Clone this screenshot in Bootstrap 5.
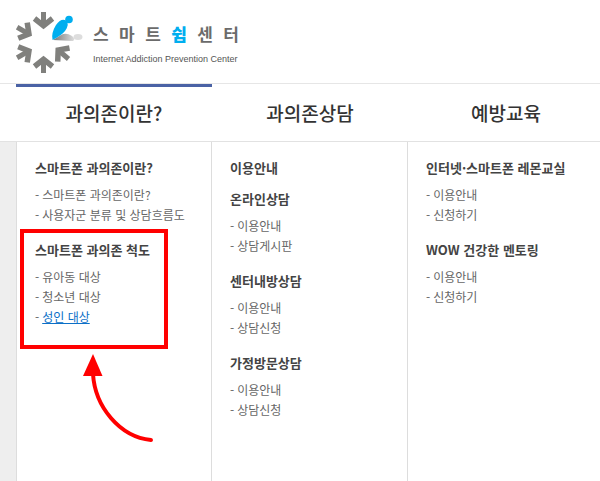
<!DOCTYPE html>
<html lang="ko">
<head>
<meta charset="utf-8">
<meta name="viewport" content="width=device-width, initial-scale=1">
<title>스마트쉼센터</title>
<link href="https://cdn.jsdelivr.net/npm/bootstrap@5.3.0/dist/css/bootstrap.min.css" rel="stylesheet">
<style>
body { font-family: "Noto Sans CJK KR", sans-serif; color: #444; background: #fff; }
a { color: inherit; text-decoration: none; }
.site-header { height: 83px; padding: 11px 16px; }
.brand-words { width: 146px; margin-left: 10px; padding-top: 11px; }
.brand-ko { font-size: 17px; line-height: 24px; font-weight: 700; color: #6b6b6b; }
.brand-ko .accent { color: #00aeef; font-weight: 900; }
.brand-en { padding-top: 6px; font-family: "Liberation Sans", sans-serif; font-size: 9px; line-height: 14px; color: #555; white-space: nowrap; }
.menu-grid { display: grid; grid-template-columns: 16px repeat(3, minmax(196px, 1fr)); }
.menu-top { border-top: 1px solid #e6e6e6; border-bottom: 1px solid #e2e2e2; }
.menu-title { height: 57px; font-size: 19px; line-height: 28px; font-weight: 500; color: #333; }
.menu-title.current { box-shadow: inset 0 3px #4a62a5; }
.menu-body { flex: 1 0 auto; }
.gutter { background: #eee; }
.menu-col { border-left: 1px solid #ddd; padding: 14px 0 0 18px; }
.menu-col + .menu-col { margin-left: -1px; }
.menu-group { position: relative; margin-bottom: 7px; }
.menu-group h2 { margin: 0; font-size: 13px; line-height: 24px; font-weight: 700; color: #444; }
.menu-group ul { padding: 5px 0 6px; }
.menu-group li { display: flex; gap: 3px; font-size: 12px; line-height: 20px; color: #666; }
.menu-group li::before { content: "-"; }
.menu-group .picked { color: #0b6fc7; text-decoration: underline; }
.highlight { position: absolute; left: -15px; top: -9px; width: 148px; height: 120px; border: 4px solid #f00; pointer-events: none; }
.pointer-arrow { position: absolute; left: 45px; top: 115px; pointer-events: none; }
</style>
</head>
<body class="d-flex flex-column min-vh-100 overflow-x-hidden">
<header class="site-header">
  <a href="#" class="d-inline-flex align-items-start">
    <svg width="67" height="63" viewBox="16 11 67 63" aria-hidden="true">
      <defs>
        <g id="ray" fill="none" stroke="#80807d" stroke-width="5"><path d="M0-30.500V-16"/><path d="M-9-24L0-16.800L9-24" stroke-width="5.500"/></g>
        <linearGradient id="shade"><stop offset="0" stop-color="#777"/><stop offset="1" stop-color="#ddd"/></linearGradient>
      </defs>
      <use href="#ray" transform="translate(43.5 42.5)"/>
      <use href="#ray" transform="translate(43.5 42.5) rotate(-60)"/>
      <use href="#ray" transform="translate(43.5 42.5) rotate(-120)"/>
      <use href="#ray" transform="translate(43.5 42.5) rotate(180)"/>
      <use href="#ray" transform="translate(45.5 39) rotate(131)"/>
      <path d="M53 40L61 35Q66 32 72 36Q76 39 73 41Z" fill="url(#shade)"/>
      <ellipse cx="78" cy="37" rx="4.5" ry="3" fill="#ddd"/>
      <path d="M52.500 40Q51 33 56 25Q61 18 66 20.500Q70 24 65 31Q62 35 52.500 40Z" fill="#00aeef"/>
      <circle cx="69" cy="19.500" r="3.800" fill="#00aeef"/>
    </svg>
    <span class="brand-words d-block">
      <span class="brand-ko d-flex justify-content-between"><span>스</span><span>마</span><span>트</span><span class="accent">쉼</span><span>센</span><span>터</span></span>
      <span class="brand-en d-block">Internet Addiction Prevention Center</span>
    </span>
  </a>
</header>
<nav class="d-flex flex-column flex-grow-1" aria-label="주 메뉴">
  <div class="menu-grid menu-top">
    <span></span>
    <a href="#" class="menu-title current d-flex align-items-center justify-content-center">과의존이란?</a>
    <a href="#" class="menu-title d-flex align-items-center justify-content-center">과의존상담</a>
    <a href="#" class="menu-title d-flex align-items-center justify-content-center">예방교육</a>
  </div>
  <div class="menu-grid menu-body">
    <div class="gutter"></div>
    <div class="menu-col">
      <section class="menu-group">
        <h2><a href="#">스마트폰 과의존이란?</a></h2>
        <ul class="list-unstyled mb-0">
          <li><a href="#">스마트폰 과의존이란?</a></li>
          <li><a href="#">사용자군 분류 및 상담흐름도</a></li>
        </ul>
      </section>
      <section class="menu-group">
        <h2><a href="#">스마트폰 과의존 척도</a></h2>
        <ul class="list-unstyled mb-0">
          <li><a href="#">유아동 대상</a></li>
          <li><a href="#">청소년 대상</a></li>
          <li><a href="#" class="picked">성인 대상</a></li>
        </ul>
        <div class="highlight"></div>
        <svg class="pointer-arrow" width="74" height="92" viewBox="80 353 74 92" aria-hidden="true">
          <path d="M93 354L102.500 376H83Z" fill="#f00"/>
          <path d="M93 374C95 407 120 437 151 440" fill="none" stroke="#f00" stroke-width="4" stroke-linecap="round"/>
        </svg>
      </section>
    </div>
    <div class="menu-col">
      <section class="menu-group">
        <h2><a href="#">이용안내</a></h2>
      </section>
      <section class="menu-group">
        <h2><a href="#">온라인상담</a></h2>
        <ul class="list-unstyled mb-0">
          <li><a href="#">이용안내</a></li>
          <li><a href="#">상담게시판</a></li>
        </ul>
      </section>
      <section class="menu-group">
        <h2><a href="#">센터내방상담</a></h2>
        <ul class="list-unstyled mb-0">
          <li><a href="#">이용안내</a></li>
          <li><a href="#">상담신청</a></li>
        </ul>
      </section>
      <section class="menu-group">
        <h2><a href="#">가정방문상담</a></h2>
        <ul class="list-unstyled mb-0">
          <li><a href="#">이용안내</a></li>
          <li><a href="#">상담신청</a></li>
        </ul>
      </section>
    </div>
    <div class="menu-col">
      <section class="menu-group">
        <h2><a href="#">인터넷·스마트폰 레몬교실</a></h2>
        <ul class="list-unstyled mb-0">
          <li><a href="#">이용안내</a></li>
          <li><a href="#">신청하기</a></li>
        </ul>
      </section>
      <section class="menu-group">
        <h2><a href="#">WOW 건강한 멘토링</a></h2>
        <ul class="list-unstyled mb-0">
          <li><a href="#">이용안내</a></li>
          <li><a href="#">신청하기</a></li>
        </ul>
      </section>
    </div>
  </div>
</nav>
<script src="https://cdn.jsdelivr.net/npm/bootstrap@5.3.0/dist/js/bootstrap.bundle.min.js"></script>
</body>
</html>
